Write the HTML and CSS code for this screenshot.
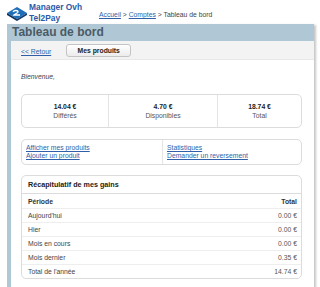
FILE: index.html
```
<!DOCTYPE html>
<html lang="fr">
<head>
<meta charset="utf-8">
<title>Tableau de bord</title>
<link rel="stylesheet" href="styles.css">
</head>
<body>
<div class="page">
  <div class="top">
    <div class="brand">
      <svg class="logo" width="22" height="16" viewBox="0 0 22 16">
        <polygon points="1,8 11,2 21,8 11,14" fill="#1f6fb8"/>
        <polygon points="1,8 11,14 11,16 1,10" fill="#0d2f5a"/>
        <polygon points="21,8 11,14 11,16 21,10" fill="#123d70"/>
        <path d="M7,7 C8,5 12,5 12,7 C12,8 9,9 8,10 L14,10" fill="none" stroke="#fff" stroke-width="1.3"/>
      </svg>
      <div class="brand-name">Manager Ovh<br>Tel2Pay</div>
    </div>
    <div class="crumbs"><a href="#">Accueil</a> &gt; <a href="#">Comptes</a> &gt; Tableau de bord</div>
  </div>
  <div class="frame">
    <h1 class="title">Tableau de bord</h1>
    <div class="toolbar">
      <a href="#" class="back">&lt;&lt; Retour</a>
      <button class="btn">Mes produits</button>
    </div>
    <div class="content">
      <p class="welcome">Bienvenue,</p>
      <div class="box stats">
        <div class="stat"><b>14.04 €</b><span>Différés</span></div>
        <div class="stat"><b>4.70 €</b><span>Disponibles</span></div>
        <div class="stat"><b>18.74 €</b><span>Total</span></div>
      </div>
      <div class="box links">
        <div class="col"><a href="#">Afficher mes produits</a><a href="#">Ajouter un produit</a></div>
        <div class="col"><a href="#">Statistiques</a><a href="#">Demander un reversement</a></div>
      </div>
      <div class="box summary">
        <div class="sum-title">Récapitulatif de mes gains</div>
        <div class="row head"><span>Période</span><span>Total</span></div>
        <div class="row"><span>Aujourd'hui</span><span>0.00 €</span></div>
        <div class="row"><span>Hier</span><span>0.00 €</span></div>
        <div class="row"><span>Mois en cours</span><span>0.00 €</span></div>
        <div class="row"><span>Mois dernier</span><span>0.35 €</span></div>
        <div class="row"><span>Total de l'année</span><span>14.74 €</span></div>
      </div>
    </div>
  </div>
</div>
</body>
</html>
```
FILE: styles.css
```
* { box-sizing: border-box; }
html, body { margin: 0; padding: 0; background: #fff; }
body { font-family: "Liberation Sans", Arial, sans-serif; font-size: 6.8px; color: #333; }
a { color: #2f5fa8; text-decoration: underline; }
.page { width: 314px; padding-left: 3px; }
.top { display: flex; align-items: center; height: 24px; padding-left: 3px; }
.brand { display: flex; align-items: center; gap: 1px; width: 93px; }
.logo { display: block; margin-top: 2px; }
.brand-name { font-size: 8.4px; font-weight: bold; color: #2a5aa8; line-height: 10.5px; margin-top: 1px; }
.crumbs { font-size: 6.8px; color: #444; margin-top: 5px; }
.frame { margin-left: 4px; border-left: 4px solid #b0c8d5; box-shadow: 2px 1px 2px #c8c8c8; padding-bottom: 9px; }
.title { margin: 0; height: 17px; background: #b0c8d5; font-size: 12px; font-weight: bold; color: #4b5a66; line-height: 17px; padding-left: 1px; }
.toolbar { display: flex; align-items: center; height: 19px; background: #f3f3f3; border-bottom: 1px solid #e8e8e8; padding-left: 10px; gap: 15px; }
.back { font-size: 6.8px; margin-top: 2px; }
.btn { font-family: inherit; font-size: 6.8px; font-weight: bold; color: #222; width: 65px; height: 13px; border: 1px solid #c4c4c4; border-radius: 3px; background: linear-gradient(#ffffff, #ececec); padding: 0; }
.content { padding: 12px 12px 0 10px; }
.welcome { margin: 0 0 12px; font-style: italic; color: #444; line-height: 10px; }
.box { border: 1px solid #dcdcdc; border-radius: 5px; margin-bottom: 11px; }
.stats { display: grid; grid-template-columns: 86px 109px 1fr; height: 34px; }
.stat { display: flex; flex-direction: column; align-items: center; justify-content: center; gap: 2px; border-left: 1px solid #e4e4e4; }
.stat:first-child { border-left: 0; }
.stat b { font-size: 6.8px; color: #222; }
.stat span { color: #555; }
.links { display: grid; grid-template-columns: 140px 1fr; height: 26px; margin-bottom: 10px; }
.col { display: flex; flex-direction: column; justify-content: center; padding-left: 4px; line-height: 8px; }
.col + .col { border-left: 1px solid #e4e4e4; }
.summary { margin-bottom: 0; }
.sum-title { height: 18px; line-height: 18px; padding-left: 6px; font-weight: bold; font-size: 7.2px; color: #222; border-bottom: 1px solid #dcdcdc; }
.row { display: flex; justify-content: space-between; height: 14px; align-items: center; padding: 0 4px 0 6px; border-top: 1px solid #eeeeee; color: #444; }
.sum-title + .row { border-top: 0; }
.row.head { font-weight: bold; color: #333; }
.row span:last-child { color: #555; }
.row.head span:last-child { color: #333; }
```
